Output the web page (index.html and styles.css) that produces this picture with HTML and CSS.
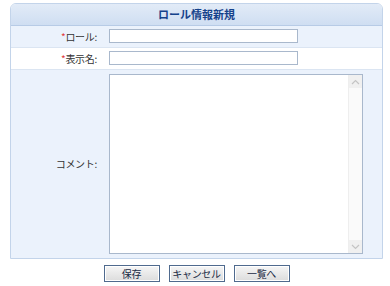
FILE: index.html
```html
<!DOCTYPE html>
<html lang="ja">
<head>
<meta charset="utf-8">
<link rel="stylesheet" href="styles.css">
</head>
<body>
<div class="page">
  <div class="panel">
    <div class="panel-head">ロール情報新規</div>
    <div class="row row-blue">
      <div class="label"><span class="req">*</span>ロール:</div>
      <div class="field"><div class="input"></div></div>
    </div>
    <div class="row row-white">
      <div class="label"><span class="req">*</span>表示名:</div>
      <div class="field"><div class="input"></div></div>
    </div>
    <div class="row row-blue row-tall">
      <div class="label label-mid">コメント:</div>
      <div class="field">
        <div class="textarea">
          <div class="scroll">
            <div class="arrow">
              <svg width="9" height="6" viewBox="0 0 9 6"><path d="M1 5 L4.5 1.5 L8 5" fill="none" stroke="#c4c4c4" stroke-width="1.2"/></svg>
            </div>
            <div class="track"></div>
            <div class="arrow">
              <svg width="9" height="6" viewBox="0 0 9 6"><path d="M1 1 L4.5 4.5 L8 1" fill="none" stroke="#c4c4c4" stroke-width="1.2"/></svg>
            </div>
          </div>
        </div>
      </div>
    </div>
  </div>
  <div class="buttons">
    <div class="btn">保存</div>
    <div class="btn">キャンセル</div>
    <div class="btn">一覧へ</div>
  </div>
</div>
</body>
</html>
```

FILE: styles.css
```css
html, body {
  margin: 0;
  padding: 0;
  background: #ffffff;
}
body {
  font-family: "Noto Sans CJK JP", "Liberation Sans", sans-serif;
  font-size: 10px;
  color: #333333;
}
.page {
  padding: 3px 7px 0 10px;
  width: 373px;
}
.panel {
  border: 1px solid #c3d4ea;
  border-radius: 6px 6px 0 0;
  overflow: hidden;
}
.panel-head {
  height: 21px;
  line-height: 21px;
  text-align: center;
  font-weight: bold;
  font-size: 11px;
  color: #15428b;
  background: linear-gradient(#e2ebf7, #cfdef2);
  border-bottom: 1px solid #b7cbe6;
}
.row {
  display: flex;
  border-bottom: 1px solid #dbe5f2;
}
.row:last-child {
  border-bottom: none;
}
.row-blue {
  background: #ebf2fc;
}
.row-white {
  background: #ffffff;
}
.label {
  width: 86px;
  text-align: right;
  height: 21px;
  line-height: 21px;
  color: #333333;
  font-size: 10px;
  letter-spacing: -0.3px;
}
.req {
  color: #e0393c;
}
.field {
  padding: 3px 0 0 12px;
}
.row .field {
  height: 18px;
}
.input {
  width: 187px;
  height: 12px;
  border: 1px solid #a9b8cc;
  background: #ffffff;
}
.row-tall {
  height: 188px;
  align-items: stretch;
}
.row-tall .field {
  height: auto;
  padding: 4px 0 0 12px;
}
.label-mid {
  height: auto;
  display: flex;
  align-items: center;
  justify-content: flex-end;
  line-height: 1;
}
.textarea {
  width: 252px;
  height: 178px;
  border: 1px solid #a9b8cc;
  background: #ffffff;
  display: flex;
  justify-content: flex-end;
}
.scroll {
  width: 13px;
  display: flex;
  flex-direction: column;
  background: #fafafa;
  border-left: 1px solid #eeeeee;
}
.arrow {
  height: 13px;
  display: flex;
  align-items: center;
  justify-content: center;
  background: #f0f0f0;
}
.track {
  flex: 1;
}
.buttons {
  display: flex;
  justify-content: center;
  gap: 9px;
  padding: 6px 0 0 0;
}
.btn {
  width: 54px;
  height: 15px;
  line-height: 15px;
  text-align: center;
  font-size: 10px;
  letter-spacing: -0.3px;
  white-space: nowrap;
  color: #1a2a44;
  border: 1px solid #4f6a8e;
  background: linear-gradient(#f6f6f6, #dcdcdc);
  box-shadow: inset 0 0 0 1px #ffffff;
}
```
